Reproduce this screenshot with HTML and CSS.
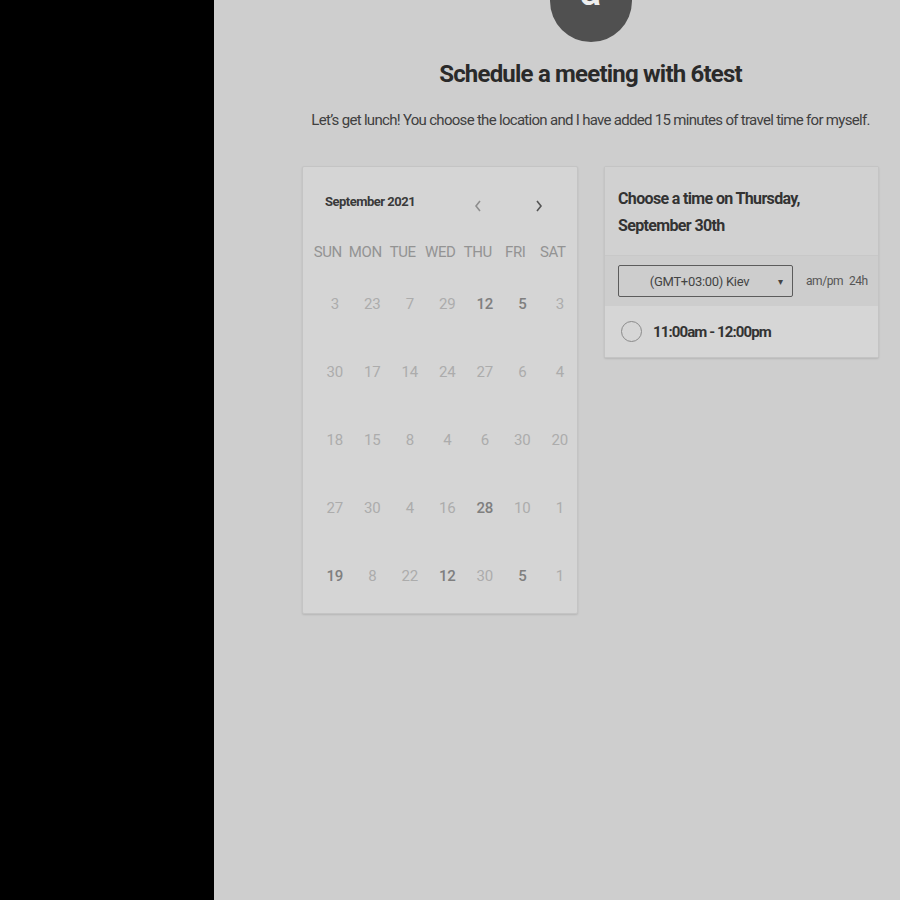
FILE: index.html
```html
<!DOCTYPE html>
<html>
<head>
<meta charset="utf-8">
<link rel="stylesheet" href="styles.css">
</head>
<body>
<div class="sidebar"></div>
<div class="main">
  <div class="content">
    <div class="avatar"><span>a</span></div>
    <h1 class="title">Schedule a meeting with 6test</h1>
    <p class="subtitle">Let’s get lunch! You choose the location and I have added 15 minutes of travel time for myself.</p>
    <div class="cards">
      <div class="calendar">
        <div class="cal-head">
          <span class="month">September 2021</span>
          <div class="arrows">
            <svg class="arrow prev" width="10" height="14" viewBox="0 0 10 14"><path d="M7 2 L3 7 L7 12" fill="none" stroke="currentColor" stroke-width="1.6"/></svg>
            <svg class="arrow next" width="10" height="14" viewBox="0 0 10 14"><path d="M3 2 L7 7 L3 12" fill="none" stroke="currentColor" stroke-width="1.6"/></svg>
          </div>
        </div>
        <div class="weekdays">
          <span>SUN</span><span>MON</span><span>TUE</span><span>WED</span><span>THU</span><span>FRI</span><span>SAT</span>
        </div>
        <div class="dates">
          <span>3</span><span>23</span><span>7</span><span>29</span><span class="on">12</span><span class="on">5</span><span>3</span>
          <span>30</span><span>17</span><span>14</span><span>24</span><span>27</span><span>6</span><span>4</span>
          <span>18</span><span>15</span><span>8</span><span>4</span><span>6</span><span>30</span><span>20</span>
          <span>27</span><span>30</span><span>4</span><span>16</span><span class="on">28</span><span>10</span><span>1</span>
          <span class="on">19</span><span>8</span><span>22</span><span class="on">12</span><span>30</span><span class="on">5</span><span>1</span>
        </div>
      </div>
      <div class="times">
        <div class="times-head">Choose a time on Thursday, September 30th</div>
        <div class="tz-row">
          <div class="select"><span>(GMT+03:00) Kiev</span><span class="caret">▾</span></div>
          <div class="fmt"><span>am/pm</span><span>24h</span></div>
        </div>
        <div class="slot">
          <span class="radio"></span>
          <span class="slot-text">11:00am - 12:00pm</span>
        </div>
      </div>
    </div>
  </div>
</div>
</body>
</html>
```
FILE: styles.css
```css
html, body {
  margin: 0;
  padding: 0;
  height: 100%;
}
body {
  display: flex;
  font-family: Roboto, "Liberation Sans", sans-serif;
  background: #000;
  overflow: hidden;
}
.sidebar {
  width: 214px;
  flex: none;
  background: #000;
}
.main {
  flex: 1;
  background: #cecece;
  height: 900px;
}
.content {
  width: 577px;
  margin-left: 88px;
  display: flex;
  flex-direction: column;
  align-items: center;
}
.avatar {
  width: 82px;
  height: 82px;
  border-radius: 50%;
  background: #505050;
  margin-top: -40px;
  display: flex;
  align-items: center;
  justify-content: center;
  color: #eee;
  font-size: 40px;
  font-weight: 500;
  line-height: 1;
}
.avatar span {
  margin-top: -18px;
}
.title {
  margin: 19px 0 0;
  font-size: 24px;
  font-weight: 700;
  color: #2a2a2a;
  letter-spacing: -0.8px;
  line-height: 26px;
}
.subtitle {
  margin: 24px 0 0;
  font-size: 15px;
  color: #404040;
  letter-spacing: -0.7px;
  line-height: 18px;
}
.cards {
  align-self: stretch;
  margin-top: 37px;
  display: flex;
  gap: 26px;
  align-items: flex-start;
}
.calendar {
  width: 274px;
  height: 446px;
  background: #d5d5d5;
  border: 1px solid #c4c4c4;
  box-shadow: 0 1px 2px rgba(0,0,0,0.12);
  border-radius: 2px;
  box-sizing: content-box;
}
.cal-head {
  display: flex;
  align-items: center;
  height: 30px;
  margin-top: 19px;
  padding-left: 22px;
}
.month {
  font-size: 13px;
  font-weight: 700;
  color: #3a3a3a;
  letter-spacing: -0.5px;
  width: 148px;
}
.arrows {
  display: flex;
  gap: 51px;
  margin-top: 10px;
}
.arrow.prev { color: #8e8e8e; }
.arrow.next { color: #555; }
.weekdays {
  display: grid;
  grid-template-columns: repeat(7, 37.5px);
  margin-left: 6px;
  margin-top: 26px;
  height: 20px;
  align-items: center;
}
.weekdays span {
  text-align: center;
  font-size: 15px;
  color: #939393;
  letter-spacing: -0.4px;
}
.dates {
  display: grid;
  grid-template-columns: repeat(7, 37.5px);
  grid-auto-rows: 68px;
  margin-left: 13px;
  margin-top: 8px;
}
.dates span {
  display: flex;
  align-items: center;
  justify-content: center;
  font-size: 15px;
  color: #acacac;
  font-weight: 400;
  letter-spacing: -0.3px;
}
.dates span.on {
  color: #7f7f7f;
  font-weight: 500;
}
.times {
  width: 273px;
  background: #d5d5d5;
  border: 1px solid #c4c4c4;
  box-shadow: 0 1px 2px rgba(0,0,0,0.12);
  border-radius: 2px;
}
.times-head {
  background: #d1d1d1;
  padding: 18px 60px 16px 13px;
  font-size: 16px;
  font-weight: 700;
  color: #333;
  line-height: 27px;
  letter-spacing: -0.65px;
  border-bottom: 1px solid #c8c8c8;
}
.tz-row {
  background: #cdcdcd;
  height: 50px;
  display: flex;
  align-items: center;
  padding-left: 13px;
}
.select {
  border: 1px solid #5c5c5c;
  border-radius: 2px;
  display: flex;
  align-items: center;
  font-size: 13px;
  color: #444;
  letter-spacing: -0.3px;
  position: relative;
  justify-content: center;
  box-sizing: border-box;
  width: 175px;
  height: 32px;
}
.select span:first-child {
  margin-left: -12px;
}
.caret {
  position: absolute;
  right: 9px;
  font-size: 10px;
  color: #444;
}
.fmt {
  margin-left: 13px;
  display: flex;
  gap: 6px;
  font-size: 12px;
  color: #555;
  letter-spacing: -0.45px;
}
.slot {
  height: 51px;
  display: flex;
  align-items: center;
  padding-left: 16px;
  background: #d6d6d6;
}
.radio {
  width: 19px;
  height: 19px;
  border: 1.5px solid #8a8a8a;
  border-radius: 50%;
  box-sizing: content-box;
}
.slot-text {
  margin-left: 11px;
  font-size: 15px;
  font-weight: 700;
  color: #333;
  letter-spacing: -0.9px;
}
```
